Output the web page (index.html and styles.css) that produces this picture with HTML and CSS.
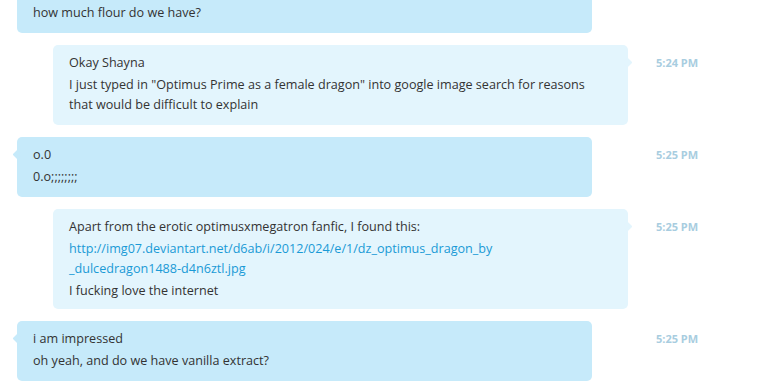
FILE: index.html
```html
<html>
    <head>
        <link rel="stylesheet" href="styles.css">
    </head>
<body>
    <div class="chat">

        <div class="row">
            <div class="lane">
                <div class="bubble theirs">
                    <p>how much flour do we have?</p>
                </div>
            </div>
        </div>

        <div class="row">
            <div class="lane">
                <div class="bubble mine tail">
                    <p>Okay Shayna</p>
                    <p>I just typed in "Optimus Prime as a female dragon" into google image search for reasons<br>that would be difficult to explain</p>
                </div>
            </div>
            <span class="time">5:24 PM</span>
        </div>

        <div class="row">
            <div class="lane">
                <div class="bubble theirs tail">
                    <p>o.0</p>
                    <p>0.o;;;;;;;;</p>
                </div>
            </div>
            <span class="time">5:25 PM</span>
        </div>

        <div class="row">
            <div class="lane">
                <div class="bubble mine tail long">
                    <p>Apart from the erotic optimusxmegatron fanfic, I found this:</p>
                    <p><a href="#">http://img07.deviantart.net/d6ab/i/2012/024/e/1/dz_optimus_dragon_by<br>_dulcedragon1488-d4n6ztl.jpg</a></p>
                    <p>I fucking love the internet</p>
                </div>
            </div>
            <span class="time">5:25 PM</span>
        </div>

        <div class="row">
            <div class="lane">
                <div class="bubble theirs tail">
                    <p>i am impressed</p>
                    <p>oh yeah, and do we have vanilla extract?</p>
                </div>
            </div>
            <span class="time">5:25 PM</span>
        </div>

    </div>
</body>
</html>
```

FILE: styles.css
```css
* {
    box-sizing: border-box;
}
body {
    margin: 0;
    background: #fff;
    font-family: "Open Sans", "Noto Sans", sans-serif;
    font-size: 12.6px;
    color: #333;
    overflow: hidden;
}

.chat {
    margin-top: -5px;
    display: flex;
    flex-direction: column;
    gap: 12px;
}

.row {
    display: flex;
    align-items: flex-start;
}
.lane {
    width: 628px;
    padding-left: 17px;
}

.bubble {
    position: relative;
    width: 575px;
    padding: 8px 16px 10px;
    border-radius: 5px;
}
.bubble.long {
    padding-bottom: 8px;
}
.bubble p {
    margin: 0;
    line-height: 20px;
}
.bubble p + p {
    margin-top: 2px;
}
.bubble a {
    color: #1a9ad6;
    text-decoration: none;
    white-space: nowrap;
}

.theirs {
    background: #c6eafa;
}
.mine {
    margin-left: 36px;
    background: #e3f5fd;
}

/* little speech tail */
.tail::before {
    content: "";
    position: absolute;
    top: 14px;
    width: 7px;
    height: 7px;
    border-radius: 1px;
    transform: rotate(45deg);
}
.theirs.tail::before {
    left: -3px;
    background: #c6eafa;
}
.mine.tail::before {
    right: -3px;
    background: #e3f5fd;
}

.time {
    margin-left: 28px;
    padding-top: 8px;
    line-height: 20px;
    font-size: 11px;
    font-weight: bold;
    color: #a8cde0;
}
```
